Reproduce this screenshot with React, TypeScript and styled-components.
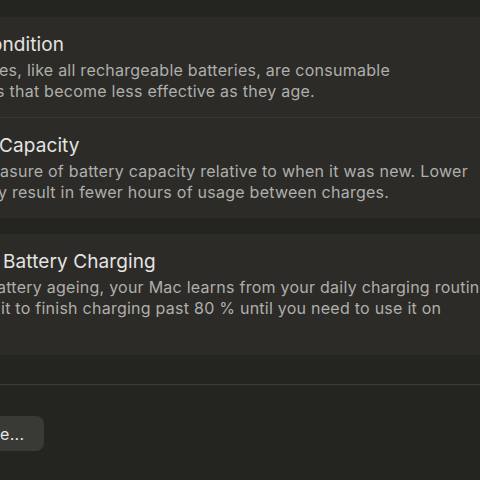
import styled, { createGlobalStyle } from 'styled-components';

const GlobalStyle = createGlobalStyle`
  html, body {
    margin: 0;
    padding: 0;
    background: #242421;
    overflow: hidden;
  }
  #root {
    width: 480px;
    height: 480px;
  }
`;

const Page = styled.div`
  width: 480px;
  height: 480px;
  box-sizing: border-box;
  padding-top: 17px;
  background: #242421;
  overflow: hidden;
  font-family: Inter, "Liberation Sans", sans-serif;
  -webkit-font-smoothing: antialiased;
`;

const Panel = styled.section`
  display: flex;
  flex-direction: column;
  background: #2c2b28;
  width: 520px;
  margin-bottom: 16px;
`;

const Row = styled.div`
  padding: 17px 0 15px;
  & + & {
    border-top: 1px solid #383835;
  }
`;

interface LineProps {
  $indent?: number;
}

const Title = styled.div<LineProps>`
  font-size: 19px;
  line-height: 22px;
  letter-spacing: 0.1px;
  color: #e4e4e1;
  white-space: nowrap;
  margin-left: ${(p) => p.$indent ?? 0}px;
`;

const Body = styled.div`
  margin-top: 4px;
  font-size: 16px;
  line-height: 21px;
  letter-spacing: 0.25px;
  color: #afafab;
`;

const Line = styled.div<LineProps>`
  white-space: nowrap;
  height: 21px;
  margin-left: ${(p) => p.$indent ?? 0}px;
`;

const Separator = styled.hr`
  margin: 29px 0 0;
  border: none;
  height: 1px;
  background: #3b3b38;
  width: 100%;
`;

const Footer = styled.div`
  display: flex;
  padding-top: 31px;
`;

const Button = styled.button`
  height: 35px;
  width: 60px;
  margin-left: -16px;
  padding: 0 0 0 16px;
  border: none;
  border-radius: 8px;
  background: #393936;
  color: #e6e6e3;
  font-family: inherit;
  font-size: 16px;
  letter-spacing: 0.3px;
  text-align: left;
`;

const sections = [
  {
    rows: [
      {
        title: 'ondition',
        titleIndent: -9,
        lines: [
          { text: 'es, like all rechargeable batteries, are consumable', indent: -1 },
          { text: 's that become less effective as they age.', indent: -4 },
        ],
      },
      {
        title: 'Capacity',
        titleIndent: -1,
        lines: [
          { text: 'asure of battery capacity relative to when it was new. Lower', indent: 0 },
          { text: 'y result in fewer hours of usage between charges.', indent: -2 },
        ],
      },
    ],
  },
  {
    rows: [
      {
        title: 'Battery Charging',
        titleIndent: 3,
        lines: [
          { text: 'attery ageing, your Mac learns from your daily charging routine', indent: -3 },
          { text: 'it to finish charging past 80 % until you need to use it on', indent: 1 },
          { text: '', indent: 0 },
        ],
      },
    ],
  },
];

export default function App() {
  return (
    <>
      <GlobalStyle />
      <Page>
        {sections.map((section, i) => (
          <Panel key={i}>
            {section.rows.map((row) => (
              <Row key={row.title}>
                <Title $indent={row.titleIndent}>{row.title}</Title>
                <Body>
                  {row.lines.map((line, j) => (
                    <Line key={j} $indent={line.indent}>
                      {line.text}
                    </Line>
                  ))}
                </Body>
              </Row>
            ))}
          </Panel>
        ))}
        <Separator />
        <Footer>
          <Button>e...</Button>
        </Footer>
      </Page>
    </>
  );
}
